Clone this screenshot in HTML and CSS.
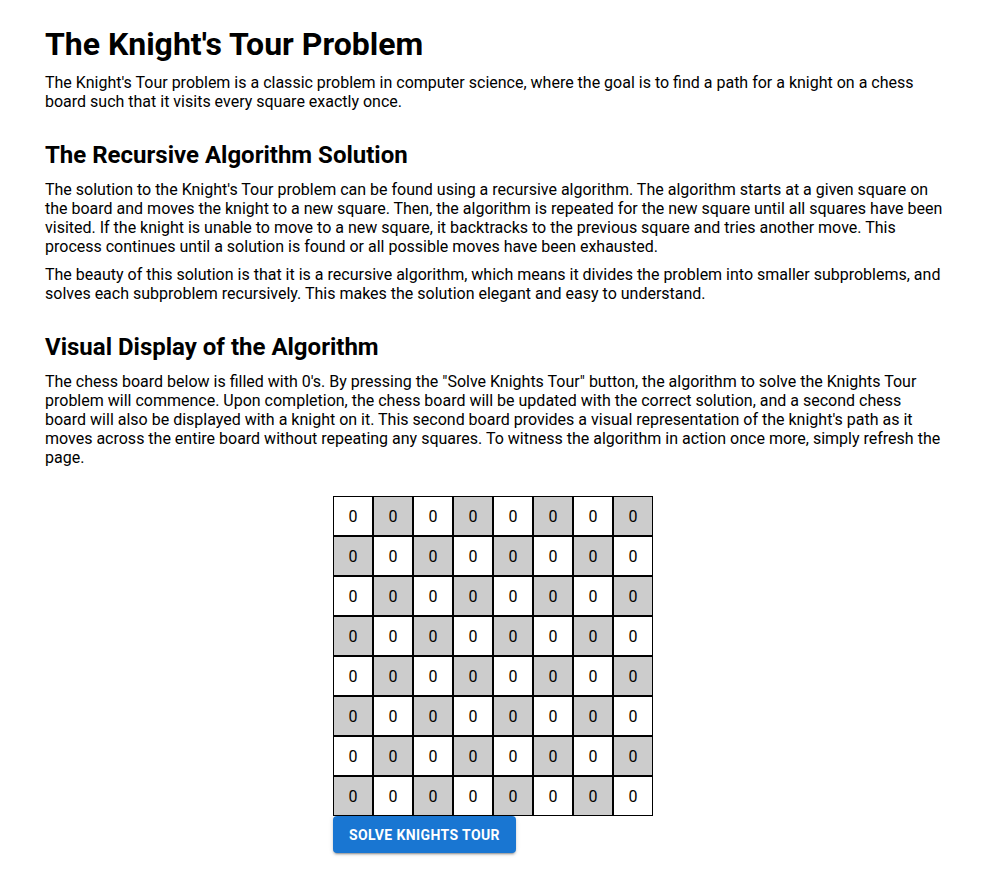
FILE: index.html
```html
<!DOCTYPE html>
<html>
<head>
<meta charset="utf-8">
<link rel="stylesheet" href="styles.css">
</head>
<body>
<main class="page">
  <h1 class="title">The Knight's Tour Problem</h1>
  <p class="text">The Knight's Tour problem is a classic problem in computer science, where the goal is to find a path for a knight on a chess board such that it visits every square exactly once.</p>
  <h2 class="subtitle">The Recursive Algorithm Solution</h2>
  <p class="text">The solution to the Knight's Tour problem can be found using a recursive algorithm. The algorithm starts at a given square on the board and moves the knight to a new square. Then, the algorithm is repeated for the new square until all squares have been visited. If the knight is unable to move to a new square, it backtracks to the previous square and tries another move. This process continues until a solution is found or all possible moves have been exhausted.</p>
  <p class="text">The beauty of this solution is that it is a recursive algorithm, which means it divides the problem into smaller subproblems, and solves each subproblem recursively. This makes the solution elegant and easy to understand.</p>
  <h2 class="subtitle">Visual Display of the Algorithm</h2>
  <p class="text">The chess board below is filled with 0's. By pressing the "Solve Knights Tour" button, the algorithm to solve the Knights Tour problem will commence. Upon completion, the chess board will be updated with the correct solution, and a second chess board will also be displayed with a knight on it. This second board provides a visual representation of the knight's path as it moves across the entire board without repeating any squares. To witness the algorithm in action once more, simply refresh the page.</p>
  <section class="board-area">
    <div class="board" id="board"></div>
    <button class="solve-btn">Solve Knights Tour</button>
  </section>
</main>
<script src="script.js"></script>
</body>
</html>
```
FILE: script.js
```js
var board = document.getElementById('board');
for (var r = 0; r < 8; r++) {
  var row = document.createElement('div');
  row.className = 'row';
  for (var c = 0; c < 8; c++) {
    var cell = document.createElement('div');
    cell.className = 'cell' + ((r + c) % 2 === 1 ? ' dark' : '');
    cell.textContent = '0';
    row.appendChild(cell);
  }
  board.appendChild(row);
}
```
FILE: styles.css
```css
html, body {
  margin: 0;
  padding: 0;
  background: #fff;
}
body {
  font-family: Roboto, "Liberation Sans", Arial, sans-serif;
  color: #000;
}
.page {
  padding: 26px 62px 40px 45px;
}
.title {
  font-size: 32px;
  font-weight: 700;
  line-height: 37px;
  margin: 0 0 10px 0;
}
.subtitle {
  font-size: 24px;
  font-weight: 700;
  line-height: 28px;
  margin: 30px 0 11px 0;
}
.text {
  font-size: 16px;
  line-height: 19px;
  margin: 0 0 9px 0;
}
.board-area {
  margin-top: 29px;
  margin-left: 288px;
  display: flex;
  flex-direction: column;
  align-items: flex-start;
}
.board {
  display: flex;
  flex-direction: column;
}
.row {
  display: flex;
}
.cell {
  width: 38px;
  height: 38px;
  border: 1px solid #000;
  background: #fff;
  display: flex;
  align-items: center;
  justify-content: center;
  font-size: 16px;
}
.cell.dark {
  background: #ccc;
}
.solve-btn {
  font-family: Roboto, "Liberation Sans", Arial, sans-serif;
  font-size: 14px;
  font-weight: 700;
  letter-spacing: 0.4px;
  text-transform: uppercase;
  color: #fff;
  background: #1976d2;
  border: none;
  border-radius: 4px;
  height: 37px;
  padding: 0 16px;
  box-shadow: 0 3px 1px -2px rgba(0,0,0,0.2), 0 2px 2px 0 rgba(0,0,0,0.14), 0 1px 5px 0 rgba(0,0,0,0.12);
}
```
